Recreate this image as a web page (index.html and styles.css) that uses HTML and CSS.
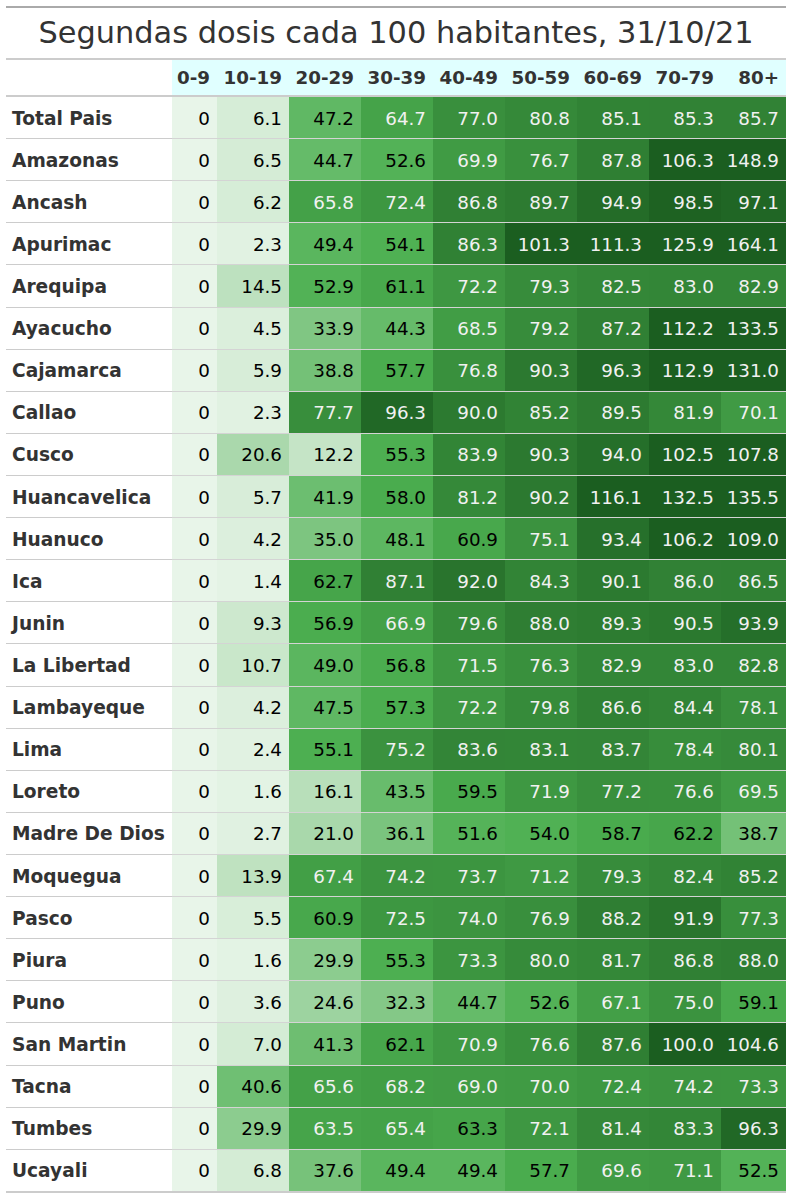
FILE: index.html
```html
<!DOCTYPE html>
<html lang="es">
<head>
<meta charset="utf-8">
<title>Segundas dosis cada 100 habitantes</title>
<link rel="stylesheet" href="styles.css">
</head>
<body>
<div class="report">
  <h1 class="title">Segundas dosis cada 100 habitantes, 31/10/21</h1>
  <table class="heat">
    <colgroup>
      <col class="c-name"><col class="c-narrow"><col class="c-num"><col class="c-num"><col class="c-num"><col class="c-num"><col class="c-num"><col class="c-num"><col class="c-num"><col class="c-last">
    </colgroup>
    <thead>
      <tr>
        <th class="blank"></th>
        <th>0-9</th><th>10-19</th><th>20-29</th><th>30-39</th><th>40-49</th><th>50-59</th><th>60-69</th><th>70-79</th><th>80+</th>
      </tr>
    </thead>
    <tbody id="rows"></tbody>
  </table>
</div>
<script src="script.js"></script>
</body>
</html>
```
FILE: styles.css
```css
html, body {
  margin: 0;
  padding: 0;
  background: #ffffff;
}
body {
  font-family: "DejaVu Sans", "Liberation Sans", sans-serif;
  color: #333333;
}
.report {
  width: 780px;
  margin: 6px 0 0 6px;
}
.title {
  margin: 0;
  height: 50px;
  line-height: 50px;
  border-top: 2px solid #aaaaaa;
  border-bottom: 2px solid #cccccc;
  font-size: 30.4px;
  font-weight: normal;
  text-align: center;
  color: #333333;
}
.heat {
  width: 780px;
  table-layout: fixed;
  border-collapse: collapse;
  font-size: 18.3px;
}
.c-name { width: 166px; }
.c-narrow { width: 45px; }
.c-num { width: 72px; }
.c-last { width: 65px; }
.heat th {
  height: 35px;
  padding: 0 7px 0 0;
  background: #e0ffff;
  font-weight: bold;
  text-align: right;
  color: #333333;
  border-bottom: 2px solid #cccccc;
}
.heat th.blank {
  background: #ffffff;
}
.heat td {
  height: 40.12px;
  padding: 1px 7px 0 0;
  text-align: right;
  border-bottom: 1px solid #d4d4d4;
  white-space: nowrap;
}
.heat td.name {
  padding: 1px 0 0 6px;
  text-align: left;
  font-size: 18.6px;
  font-weight: bold;
  color: #333333;
  border-bottom-color: #cccccc;
}
.heat td.ink-dark { color: #000000; }
.heat td.ink-light { color: #f1f1f1; }
.heat tr:last-child td {
  border-bottom: 2px solid #cccccc;
}
```
FILE: script.js
```js
const data = [
  ["Total Pais", "0", "6.1", "47.2", "64.7", "77.0", "80.8", "85.1", "85.3", "85.7"],
  ["Amazonas", "0", "6.5", "44.7", "52.6", "69.9", "76.7", "87.8", "106.3", "148.9"],
  ["Ancash", "0", "6.2", "65.8", "72.4", "86.8", "89.7", "94.9", "98.5", "97.1"],
  ["Apurimac", "0", "2.3", "49.4", "54.1", "86.3", "101.3", "111.3", "125.9", "164.1"],
  ["Arequipa", "0", "14.5", "52.9", "61.1", "72.2", "79.3", "82.5", "83.0", "82.9"],
  ["Ayacucho", "0", "4.5", "33.9", "44.3", "68.5", "79.2", "87.2", "112.2", "133.5"],
  ["Cajamarca", "0", "5.9", "38.8", "57.7", "76.8", "90.3", "96.3", "112.9", "131.0"],
  ["Callao", "0", "2.3", "77.7", "96.3", "90.0", "85.2", "89.5", "81.9", "70.1"],
  ["Cusco", "0", "20.6", "12.2", "55.3", "83.9", "90.3", "94.0", "102.5", "107.8"],
  ["Huancavelica", "0", "5.7", "41.9", "58.0", "81.2", "90.2", "116.1", "132.5", "135.5"],
  ["Huanuco", "0", "4.2", "35.0", "48.1", "60.9", "75.1", "93.4", "106.2", "109.0"],
  ["Ica", "0", "1.4", "62.7", "87.1", "92.0", "84.3", "90.1", "86.0", "86.5"],
  ["Junin", "0", "9.3", "56.9", "66.9", "79.6", "88.0", "89.3", "90.5", "93.9"],
  ["La Libertad", "0", "10.7", "49.0", "56.8", "71.5", "76.3", "82.9", "83.0", "82.8"],
  ["Lambayeque", "0", "4.2", "47.5", "57.3", "72.2", "79.8", "86.6", "84.4", "78.1"],
  ["Lima", "0", "2.4", "55.1", "75.2", "83.6", "83.1", "83.7", "78.4", "80.1"],
  ["Loreto", "0", "1.6", "16.1", "43.5", "59.5", "71.9", "77.2", "76.6", "69.5"],
  ["Madre De Dios", "0", "2.7", "21.0", "36.1", "51.6", "54.0", "58.7", "62.2", "38.7"],
  ["Moquegua", "0", "13.9", "67.4", "74.2", "73.7", "71.2", "79.3", "82.4", "85.2"],
  ["Pasco", "0", "5.5", "60.9", "72.5", "74.0", "76.9", "88.2", "91.9", "77.3"],
  ["Piura", "0", "1.6", "29.9", "55.3", "73.3", "80.0", "81.7", "86.8", "88.0"],
  ["Puno", "0", "3.6", "24.6", "32.3", "44.7", "52.6", "67.1", "75.0", "59.1"],
  ["San Martin", "0", "7.0", "41.3", "62.1", "70.9", "76.6", "87.6", "100.0", "104.6"],
  ["Tacna", "0", "40.6", "65.6", "68.2", "69.0", "70.0", "72.4", "74.2", "73.3"],
  ["Tumbes", "0", "29.9", "63.5", "65.4", "63.3", "72.1", "81.4", "83.3", "96.3"],
  ["Ucayali", "0", "6.8", "37.6", "49.4", "49.4", "57.7", "69.6", "71.1", "52.5"]
];

const stops = ["#e8f5e9", "#c8e6c9", "#a5d6a7", "#81c784", "#66bb6a",
               "#4caf50", "#43a047", "#388e3c", "#2e7d32", "#1b5e20"];

function hex(h) {
  return [1, 3, 5].map(i => parseInt(h.slice(i, i + 2), 16));
}

function shade(v) {
  const t = Math.min(Math.max(v / 100, 0), 1) * (stops.length - 1);
  const i = Math.min(Math.floor(t), stops.length - 2);
  const f = t - i;
  const a = hex(stops[i]);
  const b = hex(stops[i + 1]);
  const c = a.map((x, k) => Math.round(x + (b[k] - x) * f));
  return "rgb(" + c.join(",") + ")";
}

const body = document.getElementById("rows");
data.forEach(row => {
  const tr = document.createElement("tr");
  const name = document.createElement("td");
  name.className = "name";
  name.textContent = row[0];
  tr.appendChild(name);
  row.slice(1).forEach(text => {
    const v = parseFloat(text);
    const td = document.createElement("td");
    td.textContent = text;
    td.className = v > 63.4 ? "ink-light" : "ink-dark";
    td.style.background = shade(v);
    tr.appendChild(td);
  });
  body.appendChild(tr);
});
```
